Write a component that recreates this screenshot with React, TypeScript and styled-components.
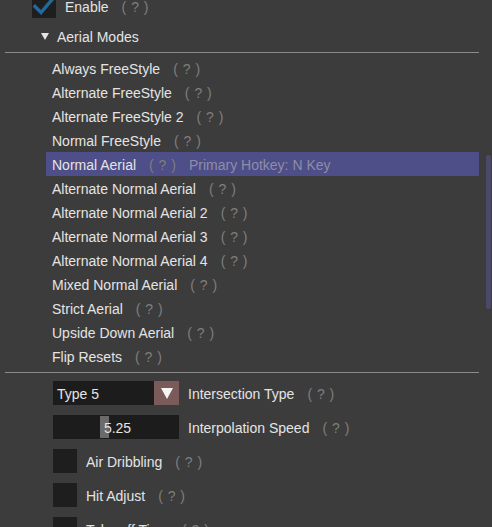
import React from "react";
import styled, { createGlobalStyle } from "styled-components";

const GlobalStyle = createGlobalStyle`
  html, body {
    margin: 0;
    padding: 0;
    background: #3c3c3c;
    overflow: hidden;
  }
  body {
    font-family: "Liberation Sans", Arial, sans-serif;
    font-size: 14px;
    color: #e4e4e4;
  }
`;

const Panel = styled.div`
  position: relative;
  width: 492px;
  height: 527px;
  overflow: hidden;
  box-sizing: border-box;
  padding: 0 13px 0 5px;
`;

const Content = styled.div`
  display: flex;
  flex-direction: column;
  margin-top: -6px;
`;

const Row = styled.div<{ $indent?: number }>`
  display: flex;
  align-items: center;
  height: 24px;
  padding-left: ${(p) => p.$indent ?? 0}px;
  white-space: nowrap;
`;

const Box = styled.div`
  width: 24px;
  height: 24px;
  background: #1e1e1e;
  display: flex;
  align-items: center;
  justify-content: center;
  flex-shrink: 0;
`;

const Label = styled.span<{ $gap?: number }>`
  position: relative;
  top: 1px;
  margin-left: ${(p) => p.$gap ?? 0}px;
  color: #e4e4e4;
`;

const Help = styled.span`
  position: relative;
  top: 1px;
  color: #7e7e7e;
  margin-left: 13px;
  word-spacing: 1px;
`;

const Hotkey = styled.span`
  position: relative;
  top: 1px;
  color: #8d8da8;
  margin-left: 13px;
`;

const Arrow = styled.span`
  width: 0;
  height: 0;
  border-left: 4px solid transparent;
  border-right: 4px solid transparent;
  border-top: 7px solid #e4e4e4;
`;

const TreeHeader = styled(Row)`
  margin-top: 6px;
  padding-left: 36px;
`;

const Separator = styled.div<{ $top: number; $bottom: number }>`
  height: 1px;
  background: #8a8a8a;
  margin: ${(p) => p.$top}px 0 ${(p) => p.$bottom}px;
`;

const ModeList = styled.div`
  display: flex;
  flex-direction: column;
  padding-left: 41px;
`;

const ModeItem = styled(Row)<{ $selected?: boolean }>`
  padding-left: 6px;
  background: ${(p) => (p.$selected ? "#4e4e88" : "transparent")};
`;

const Settings = styled.div`
  display: flex;
  flex-direction: column;
  gap: 10px;
  padding-left: 48px;
`;

const Combo = styled.div`
  display: flex;
  width: 126px;
  height: 24px;
  background: #1c1c1c;
  flex-shrink: 0;
`;

const ComboText = styled.div`
  flex: 1;
  display: flex;
  align-items: center;
  padding: 1px 0 0 4px;
`;

const ComboButton = styled.div`
  width: 25px;
  display: flex;
  align-items: center;
  justify-content: center;
  background: #7b5a5a;
`;

const ComboArrow = styled.span`
  width: 0;
  height: 0;
  border-left: 6px solid transparent;
  border-right: 6px solid transparent;
  border-top: 11px solid #f4f4f4;
`;

const Slider = styled.div`
  position: relative;
  width: 126px;
  height: 24px;
  background: #1c1c1c;
  display: flex;
  align-items: center;
  justify-content: center;
  flex-shrink: 0;
`;

const Grab = styled.div`
  position: absolute;
  left: 47px;
  top: 1px;
  width: 9px;
  height: 22px;
  background: #6a6a6a;
`;

const SliderValue = styled.span`
  position: relative;
  top: 1px;
  margin-left: 3px;
`;

const Scrollbar = styled.div`
  position: absolute;
  left: 486px;
  top: 155px;
  width: 5px;
  height: 154px;
  border-radius: 2px;
  background: #4a4a68;
`;

const Check = () => (
  <svg width="22" height="20" viewBox="0 0 22 20">
    <path d="M2 10.5 L8 16.5 L20 2.5" fill="none" stroke="#22699c" strokeWidth="3.4" strokeLinecap="square" />
  </svg>
);

const modes = [
  "Always FreeStyle",
  "Alternate FreeStyle",
  "Alternate FreeStyle 2",
  "Normal FreeStyle",
  "Normal Aerial",
  "Alternate Normal Aerial",
  "Alternate Normal Aerial 2",
  "Alternate Normal Aerial 3",
  "Alternate Normal Aerial 4",
  "Mixed Normal Aerial",
  "Strict Aerial",
  "Upside Down Aerial",
  "Flip Resets",
];

const toggles = ["Air Dribbling", "Hit Adjust", "Take off Time"];

export default function App() {
  return (
    <>
      <GlobalStyle />
      <Panel>
        <Content>
          <Row $indent={27}>
            <Box>
              <Check />
            </Box>
            <Label $gap={9}>Enable</Label>
            <Help>( ? )</Help>
          </Row>

          <TreeHeader>
            <Arrow />
            <Label $gap={8}>Aerial Modes</Label>
          </TreeHeader>

          <Separator $top={4} $bottom={3} />

          <ModeList>
            {modes.map((name) => {
              const selected = name === "Normal Aerial";
              return (
                <ModeItem key={name} $selected={selected}>
                  <Label>{name}</Label>
                  <Help>( ? )</Help>
                  {selected && <Hotkey>Primary Hotkey: N Key</Hotkey>}
                </ModeItem>
              );
            })}
          </ModeList>

          <Separator $top={4} $bottom={8} />

          <Settings>
            <Row>
              <Combo>
                <ComboText>Type 5</ComboText>
                <ComboButton>
                  <ComboArrow />
                </ComboButton>
              </Combo>
              <Label $gap={9}>Intersection Type</Label>
              <Help>( ? )</Help>
            </Row>
            <Row>
              <Slider>
                <Grab />
                <SliderValue>5.25</SliderValue>
              </Slider>
              <Label $gap={9}>Interpolation Speed</Label>
              <Help>( ? )</Help>
            </Row>
            {toggles.map((name) => (
              <Row key={name}>
                <Box />
                <Label $gap={9}>{name}</Label>
                <Help>( ? )</Help>
              </Row>
            ))}
          </Settings>
        </Content>
        <Scrollbar />
      </Panel>
    </>
  );
}
